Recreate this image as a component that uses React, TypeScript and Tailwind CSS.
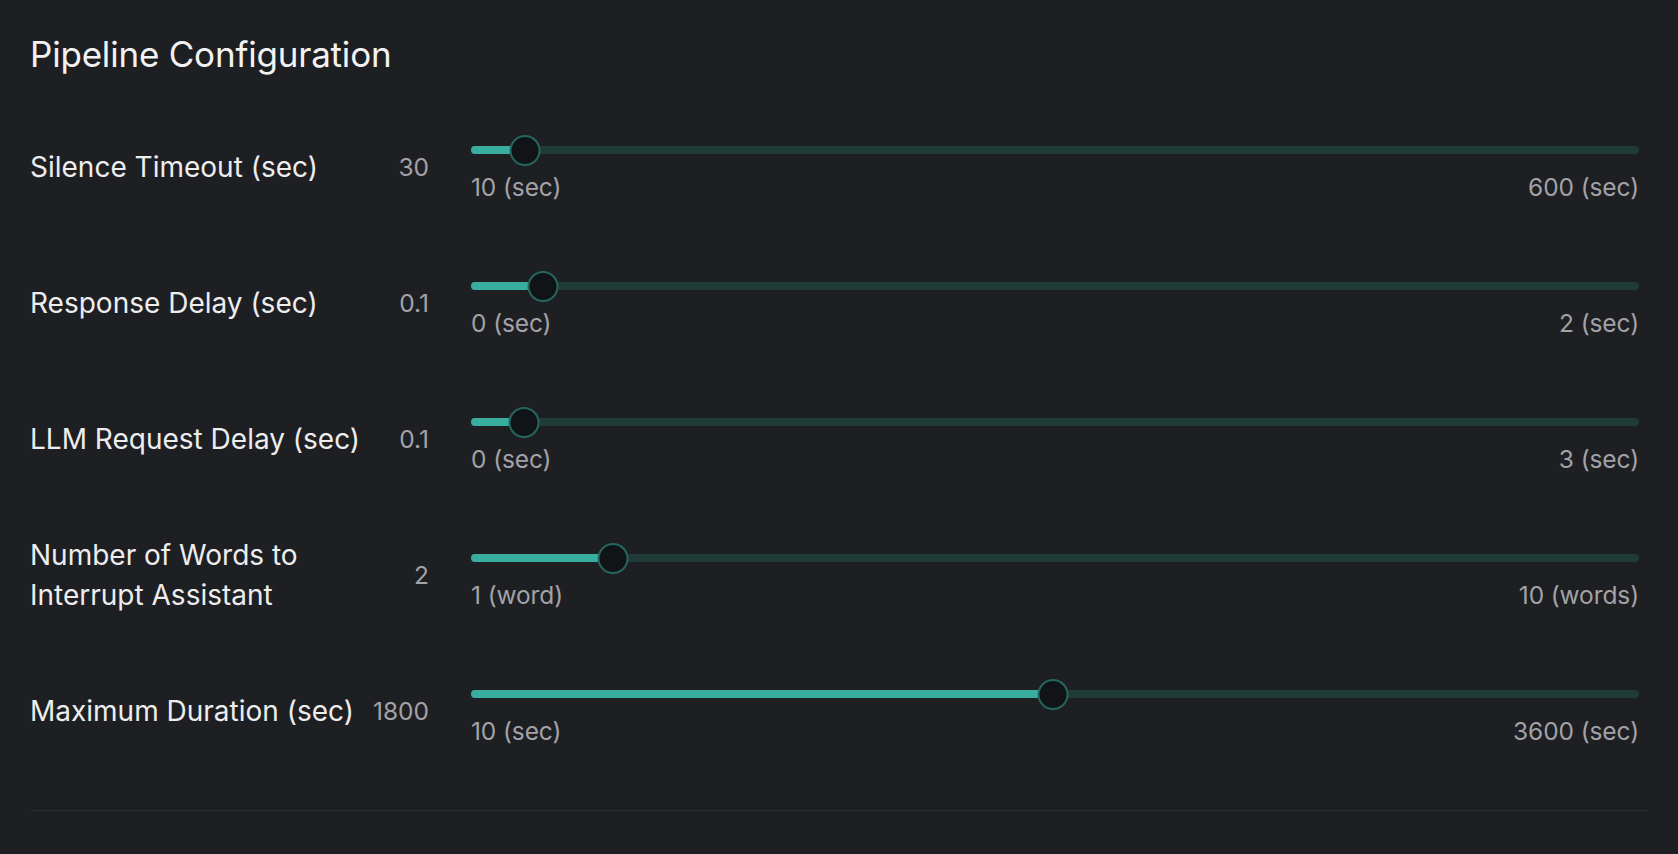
import React from "react";

interface Setting {
  label: string;
  value: number;
  min: number;
  max: number;
  minLabel: string;
  maxLabel: string;
}

const settings: Setting[] = [
  { label: "Silence Timeout (sec)", value: 30, min: 10, max: 600, minLabel: "10 (sec)", maxLabel: "600 (sec)" },
  { label: "Response Delay (sec)", value: 0.1, min: 0, max: 2, minLabel: "0 (sec)", maxLabel: "2 (sec)" },
  { label: "LLM Request Delay (sec)", value: 0.1, min: 0, max: 3, minLabel: "0 (sec)", maxLabel: "3 (sec)" },
  { label: "Number of Words to Interrupt Assistant", value: 2, min: 1, max: 10, minLabel: "1 (word)", maxLabel: "10 (words)" },
  { label: "Maximum Duration (sec)", value: 1800, min: 10, max: 3600, minLabel: "10 (sec)", maxLabel: "3600 (sec)" },
];

const THUMB = 31;

function Slider({ s }: { s: Setting }) {
  const pct = ((s.value - s.min) / (s.max - s.min)) * 100;
  // keep the thumb inside the track, the way radix does it
  const offset = (THUMB / 2) * (1 - (2 * pct) / 100);

  return (
    <div className="flex-1 min-w-0 pr-[9px]">
      <div className="relative h-[31px] flex items-center">
        <div className="relative w-full h-[8px] rounded-full bg-[#203c38] overflow-hidden">
          <div
            className="absolute left-0 top-0 h-full bg-[#38ae9e]"
            style={{ width: `${pct}%` }}
          />
        </div>
        <div
          className="absolute top-0 h-[31px] w-[31px] -translate-x-1/2 rounded-full border-2 border-[#25675e] bg-[#101417]"
          style={{ left: `calc(${pct}% + ${offset}px)` }}
        />
      </div>
      <div className="mt-[4px] flex items-center justify-between text-[24.5px] leading-[34px] tracking-[-0.1px] text-[#a2a2a7]">
        <span>{s.minLabel}</span>
        <span>{s.maxLabel}</span>
      </div>
    </div>
  );
}

export default function App() {
  return (
    <div
      className="min-h-screen bg-[#1e1f23] px-[30px] pt-[33px]"
      style={{ fontFamily: "Inter, 'Noto Sans', sans-serif" }}
    >
      <h1 className="text-[35px] leading-[42px] font-normal tracking-[-0.2px] text-[#f2f2f2]">
        Pipeline Configuration
      </h1>

      <div className="mt-[26px]">
        {settings.map((s) => (
          <div key={s.label} className="flex h-[136px] items-center gap-[42px]">
            <div className="mb-[4px] flex w-[399px] shrink-0 items-center justify-between gap-[16px]">
              <span className="text-[28px] leading-[40px] text-[#ededed]">
                {s.label}
              </span>
              <span className="shrink-0 text-[24.5px] leading-[34px] text-[#a2a2a7]">
                {s.value}
              </span>
            </div>
            <Slider s={s} />
          </div>
        ))}
      </div>

      <div className="mt-[29px] border-t border-[#2b2c31]" />
    </div>
  );
}
